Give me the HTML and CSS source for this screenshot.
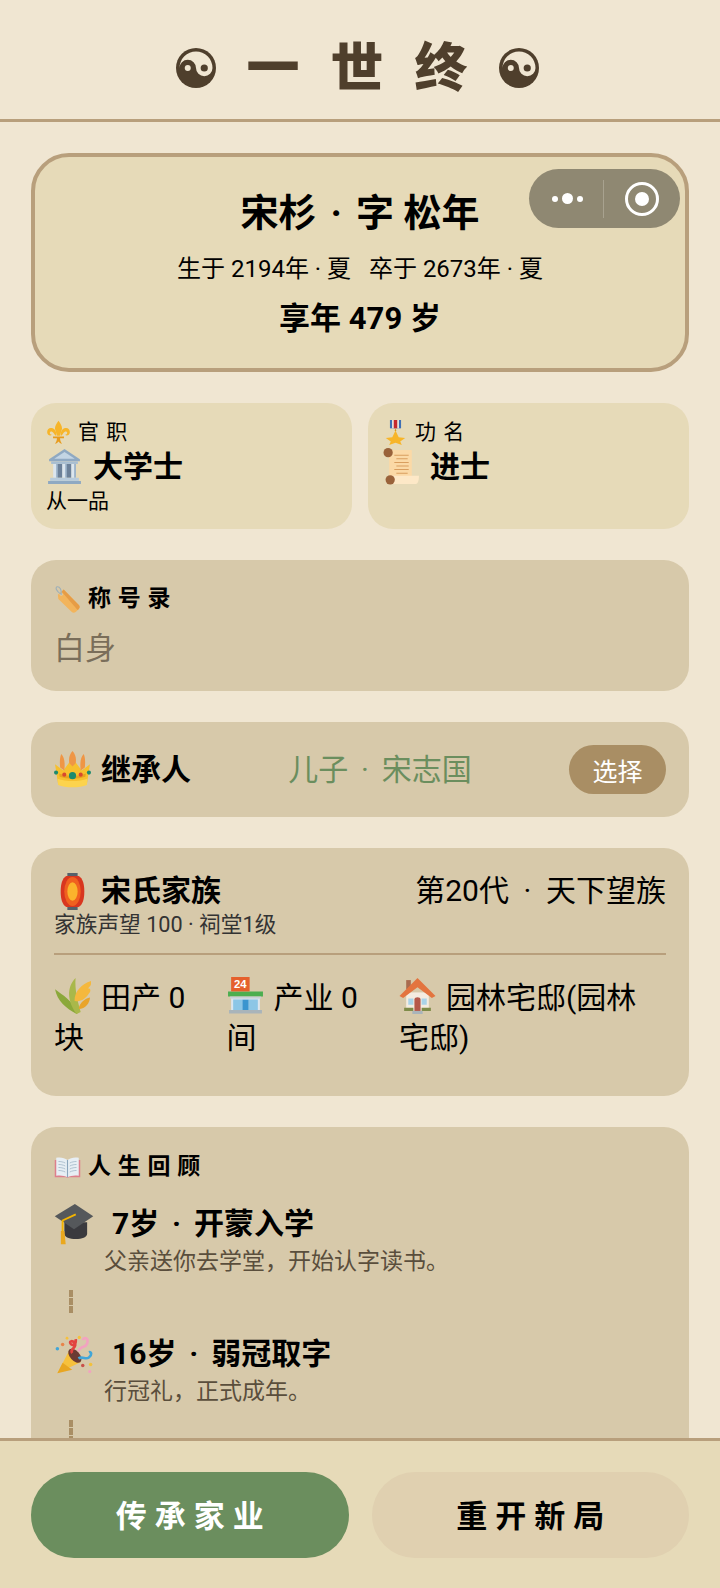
FILE: index.html
```html
<!DOCTYPE html>
<html lang="zh-CN">
<head>
    <meta charset="UTF-8">
    <meta name="viewport" content="width=device-width, initial-scale=1.0">
    <title>一世终</title>
    <link rel="stylesheet" href="styles.css">
</head>
<body>
    <svg class="defs" width="0" height="0">
        <defs>
            <symbol id="taiji" viewBox="0 0 40 40">
                <circle cx="20" cy="20" r="20" fill="#4f3f2c"/>
                <g transform="rotate(-90 20 20)">
                    <path d="M20 3.500a16.500 16.500 0 0 1 0 33 8.250 8.250 0 0 1 0-16.500 8.250 8.250 0 0 0 0-16.500z" fill="#f0e6d2"/>
                    <circle cx="20" cy="11.750" r="3" fill="#f0e6d2"/>
                    <circle cx="20" cy="28.250" r="3.600" fill="#4f3f2c"/>
                </g>
            </symbol>
            <symbol id="fleur" viewBox="0 0 32 32">
                <path d="M16 1c3 4 4.500 7 4.500 10S18 17 18 20h-4c0-3-2.500-6-2.500-9S13 5 16 1z" fill="#f7b529"/>
                <path d="M11 12C6 8 1 11 1.500 16c.3 3.500 4 5 6 3-1.800-.2-3-1.500-2.600-3 .5-2 3.500-1.500 5 1 1.200 2 2 3 3.100 3.500l.5-4z" fill="#f7b529"/>
                <path d="M21 12c5-4 10-1 9.500 4-.3 3.500-4 5-6 3 1.800-.2 3-1.500 2.600-3-.5-2-3.500-1.500-5 1-1.200 2-2 3-3.100 3.500l-.5-4z" fill="#f7b529"/>
                <path d="M9 21h14v2.500H18c0 3 1 5 2.500 7-2-.5-3.500-1.500-4.500-3-1 1.500-2.500 2.500-4.500 3 1.500-2 2.500-4 2.500-7H9z" fill="#e89b1c"/>
            </symbol>
            <symbol id="bank" viewBox="0 0 36 36">
                <path d="M18 1 33 11v2H3v-2z" fill="#8fa9c2"/>
                <path d="M18 4 28 10.500H8z" fill="#c3d5e4"/>
                <path d="M5 13h26v2.500H5z" fill="#a7bed2"/>
                <path d="M7 15.500h4.500V29H7zM15.700 15.500h4.600V29h-4.600zM24.500 15.500H29V29h-4.500z" fill="#dbe6ef"/>
                <path d="M10 15.500h1.500V29H10zM18.800 15.500h1.500V29h-1.500zM27.500 15.500H29V29h-1.500z" fill="#8fa9c2"/>
                <path d="M11.500 15.500h4.200V29h-4.200zM20.300 15.500h4.200V29h-4.200z" fill="#6c8199"/>
                <path d="M4 29h28v3H4z" fill="#b7cbdc"/>
                <path d="M2 32h32v3H2z" fill="#8fa9c2"/>
            </symbol>
            <symbol id="medal" viewBox="0 0 32 36">
                <path d="M8 0h16v12H8z" fill="#3f6fb5"/>
                <path d="M11 0h10v12H11z" fill="#e8e4dc"/>
                <path d="M13.500 0h5v12h-5z" fill="#c6282d"/>
                <path d="M16 12l1.300 4h-2.600z" fill="#d99a1c"/>
                <path d="m16 15 4.600 9.800 9.400 1-7.200 5.200 2.300 5-9.100-3.300L6.900 36l2.300-5L2 25.800l9.400-1z" fill="#f7b529"/>
            </symbol>
            <symbol id="scroll" viewBox="0 0 36 36">
                <path d="M6 2h22v28H6z" fill="#fbd9a6"/>
                <path d="M6 27h29c0 4-1 8-3 8H7z" fill="#fde8c7"/>
                <circle cx="5" cy="4.500" r="4.500" fill="#99623a"/>
                <circle cx="7" cy="31" r="4.500" fill="#99623a"/>
                <path d="M11 7h14M13 10.500h11M11 14h14M13 17.500h12M11 21h14M13 24.500h11" stroke="#d99e5f" stroke-width="1" fill="none"/>
            </symbol>
            <symbol id="tag" viewBox="0 0 28 28">
                <path d="M4 9 10 3.500l15.500 16c1.500 1.500 1.500 3 0 4.500l-3 3c-1.500 1-3 1-4.300-.3L4.500 13.500z" fill="#f2b45c"/>
                <path d="M10 3.500l15.500 16c1.500 1.500 1.500 3 0 4.500l-1 1L8 6z" fill="#e69c46"/>
                <circle cx="7.500" cy="8.500" r="1.600" fill="#d7c9aa"/>
                <path d="M7.500 8.500C2 5.500 1 1 3.500.8S8 4 7.500 8.500z" fill="none" stroke="#9fb0b8" stroke-width="1.200"/>
            </symbol>
            <symbol id="crown" viewBox="0 0 36 36">
                <path d="M1 13l8 6 9-12 9 12 8-6-3 19H4z" fill="#f7c02e"/>
                <path d="M7 3c3 3 4 8 3 16l-4-3c-.5-5-.5-9 1-13zM18 0c3 3 4 8 3 12l-3 3-3-3c-1-4 0-9 3-12zM29 3c-3 3-4 8-3 16l4-3c.5-5 .5-9-1-13z" fill="#ef9645"/>
                <path d="M3.500 27c8 3 21 3 29 0l-.5 6c-7 3-21 3-28 0z" fill="#fcd34d"/>
                <path d="M5 22c8 3 18 3 26 0l-.5 3c-7 2.500-18 2.500-25 0z" fill="#e8a31f"/>
                <circle cx="18" cy="24" r="3.500" fill="#1c8a6e"/>
                <circle cx="10" cy="23" r="2" fill="#d8482f"/>
                <circle cx="26" cy="23" r="2" fill="#d8482f"/>
                <circle cx="2" cy="21" r="2" fill="#1c8a6e"/>
                <circle cx="34" cy="21" r="2" fill="#1c8a6e"/>
            </symbol>
            <symbol id="lantern" viewBox="0 0 36 36">
                <path d="M13 0h10v4H13zM13 32h10v4H13z" fill="#56606a"/>
                <path d="M12 3h12c4 2 5.500 8 5.500 15S28 31 24 33H12c-4-2-5.500-8-5.500-15S8 5 12 3z" fill="#d8361f"/>
                <ellipse cx="18" cy="18" rx="8" ry="14" fill="#f0601f"/>
                <ellipse cx="18" cy="18" rx="5" ry="9" fill="#fbb32c"/>
            </symbol>
            <symbol id="rice" viewBox="0 0 36 36">
                <path d="M22 36C12 31 3 23 1 12c8 6 15 10 23 22z" fill="#8ba83a"/>
                <path d="M22 36C13 24 12 10 21 1c-1 11 2 23 5 33z" fill="#a9b84a"/>
                <path d="M20 23c0-9 7-16 16-19 1 4-2 6-3 7 3 0 3 3 1 5-3 5-9 9-14 7z" fill="#f5b83d"/>
                <path d="M24 31c1-6 6-10 11-11 0 5-5 12-11 11z" fill="#e9a42a"/>
            </symbol>
            <symbol id="store" viewBox="0 0 36 36">
                <path d="M4 20h28v14H4z" fill="#dbe6ef"/>
                <path d="M6 22h9v10H6zM21 22h9v10h-9z" fill="#8cc6e6"/>
                <path d="M15 22h6v12h-6z" fill="#3b95cf"/>
                <path d="M1 14h34v5H1z" fill="#4cae50"/>
                <path d="M3 19h30v2H3z" fill="#c7d1d9"/>
                <path d="M2 32h32v3.500H2z" fill="#a9b4ba"/>
                <path d="M4 0h18v14H4z" fill="#e5602c"/>
                <text class="store-num" x="13" y="11">24</text>
            </symbol>
            <symbol id="house" viewBox="0 0 36 36">
                <path d="M7 15h22v18H7z" fill="#f4ece0"/>
                <path d="M7 3h4.500v9H7z" fill="#a96b4f"/>
                <path d="M18 1 .5 18.500l3.500 2L18 10l14 10.500 3.500-2z" fill="#e3743f"/>
                <path d="M9 21h5v6H9zM22 21h5v6h-5z" fill="#a9d3e8"/>
                <path d="M15 33V22c0-3 6-3 6 0v11z" fill="#b5584a"/>
                <path d="M5 30h9v3H5zM22 30h9v3h-9z" fill="#7e8b48"/>
                <path d="M13 33h10v3H13z" fill="#a9b4ba"/>
            </symbol>
            <symbol id="book" viewBox="0 0 36 28">
                <path d="M1 4h34v23H20l-2 1-2-1H1z" fill="#dd7f8c"/>
                <path d="M3 1c6-1 11 0 15 3 4-3 9-4 15-3v24c-6-1-11 0-15 2-4-2-9-3-15-2z" fill="#e7eef4"/>
                <path d="M18 4v23" stroke="#8aa4bb" stroke-width="1.500"/>
                <path d="M6 6c3 0 6 .5 9 2M6 10c3 0 6 .5 9 2M6 14c3 0 6 .5 9 2M6 18c3 0 6 .5 9 2M30 6c-3 0-6 .5-9 2M30 10c-3 0-6 .5-9 2M30 14c-3 0-6 .5-9 2M30 18c-3 0-6 .5-9 2" stroke="#a8bccc" stroke-width="1.200" fill="none"/>
            </symbol>
            <symbol id="cap" viewBox="0 0 44 48">
                <path d="M11 22v13c0 4 6 6 13 6s13-2 13-6V22z" fill="#3a3a3e"/>
                <path d="M23 1 44 15 22 30 0 15z" fill="#55585b"/>
                <path d="M24 13 9 20v14" fill="none" stroke="#f4b400" stroke-width="2.200"/>
                <path d="M7 32h4l1.500 15H7z" fill="#eaa81e"/>
            </symbol>
            <symbol id="popper" viewBox="0 0 44 48">
                <path d="M3 46 17 19l13 14z" fill="#f7c13c"/>
                <path d="M3 46l6-12 11 8z" fill="#e8a622"/>
                <ellipse cx="23" cy="26" rx="5.500" ry="9.500" transform="rotate(-42 23 26)" fill="#6b3a33"/>
                <path d="M20 23c-4-5 6-6 3-11-2-4-7-3-5 0 1.500 3 7 2 6-5" fill="none" stroke="#e2433f" stroke-width="3"/>
                <path d="M27 21c3-8 8-3 10-9s-3-8-5-4" fill="none" stroke="#f2a3c0" stroke-width="3"/>
                <path d="M27 29c5-3 8 2 12-1s3-7 0-6" fill="none" stroke="#41a6d8" stroke-width="3"/>
                <circle cx="3" cy="18" r="2" fill="#41a6d8"/>
                <circle cx="9" cy="13" r="2" fill="#e8834a"/>
                <circle cx="14" cy="6" r="1.600" fill="#f7c13c"/>
                <circle cx="28" cy="5" r="1.800" fill="#f7c13c"/>
                <circle cx="41" cy="36" r="2" fill="#f2c13c"/>
                <circle cx="32" cy="37" r="2" fill="#c9504a"/>
                <circle cx="40" cy="44" r="1.800" fill="#f2a3c0"/>
            </symbol>
        </defs>
    </svg>

    <header class="top-bar">
        <svg class="taiji"><use href="#taiji"/></svg>
        <h1>一世终</h1>
        <svg class="taiji"><use href="#taiji"/></svg>
    </header>

    <!-- 小程序胶囊按钮 -->
    <div class="capsule">
        <div class="capsule-dots"><span></span><span class="big"></span><span></span></div>
        <div class="capsule-line"></div>
        <div class="capsule-ring"><span></span></div>
    </div>

    <main class="content">
        <section class="hero">
            <h2>宋杉 <span class="sep">·</span> 字 松年</h2>
            <p class="hero-dates">生于 2194年 · 夏&nbsp;&nbsp;&nbsp;卒于 2673年 · 夏</p>
            <p class="hero-age">享年 479 岁</p>
        </section>

        <section class="rank-row">
            <div class="rank-card">
                <div class="rank-label"><svg class="ico-label"><use href="#fleur"/></svg>官 职</div>
                <div class="rank-name"><svg class="ico-big"><use href="#bank"/></svg>大学士</div>
                <div class="rank-sub">从一品</div>
            </div>
            <div class="rank-card">
                <div class="rank-label"><svg class="ico-label"><use href="#medal"/></svg>功 名</div>
                <div class="rank-name"><svg class="ico-big"><use href="#scroll"/></svg>进士</div>
            </div>
        </section>

        <section class="panel titles">
            <div class="panel-title"><svg class="ico-title"><use href="#tag"/></svg>称 号 录</div>
            <div class="titles-empty">白身</div>
        </section>

        <section class="panel heir">
            <div class="heir-label"><svg class="ico-big"><use href="#crown"/></svg>继承人</div>
            <div class="heir-name">儿子 <span class="sep">·</span> 宋志国</div>
            <button class="heir-btn">选择</button>
        </section>

        <section class="panel family">
            <div class="family-head">
                <div>
                    <div class="family-name"><svg class="ico-big"><use href="#lantern"/></svg>宋氏家族</div>
                    <div class="family-sub">家族声望 100 · 祠堂1级</div>
                </div>
                <div class="family-rank">第20代 <span class="sep">·</span> 天下望族</div>
            </div>
            <div class="family-assets">
                <div><svg class="ico-big"><use href="#rice"/></svg>田产 0 块</div>
                <div><svg class="ico-big"><use href="#store"/></svg>产业 0 间</div>
                <div><svg class="ico-big"><use href="#house"/></svg>园林宅邸(园林宅邸)</div>
            </div>
        </section>

        <section class="panel review">
            <div class="panel-title"><svg class="ico-book"><use href="#book"/></svg>人 生 回 顾</div>
            <div class="event">
                <div class="event-title"><svg class="ico-event"><use href="#cap"/></svg><span>7岁 <span class="sep">·</span> 开蒙入学</span></div>
                <div class="event-desc">父亲送你去学堂，开始认字读书。</div>
            </div>
            <div class="event-link"></div>
            <div class="event">
                <div class="event-title"><svg class="ico-event"><use href="#popper"/></svg><span>16岁 <span class="sep">·</span> 弱冠取字</span></div>
                <div class="event-desc">行冠礼，正式成年。</div>
            </div>
            <div class="event-link"></div>
        </section>
    </main>

    <footer class="bottom-bar">
        <button class="btn btn-green">传承家业</button>
        <button class="btn btn-plain">重开新局</button>
    </footer>
</body>
</html>
```

FILE: styles.css
```css
* {
    box-sizing: border-box;
}
html, body {
    height: 100%;
}
body {
    margin: 0;
    display: flex;
    flex-direction: column;
    height: 1588px;
    overflow: hidden;
    position: relative;
    background-color: #f0e6d2;
    color: #000;
    font-family: Roboto, "Noto Sans CJK SC", sans-serif;
}
.defs {
    position: absolute;
}
.store-num {
    font-family: "Liberation Sans", sans-serif;
    font-size: 11px;
    font-weight: bold;
    fill: #fff;
    text-anchor: middle;
}
h1, h2, p {
    margin: 0;
}
svg {
    flex-shrink: 0;
}
.sep {
    margin: 0 .18em;
}

/* 顶部标题 */
.top-bar {
    flex: none;
    height: 122px;
    padding: 20px 6px 0 0;
    display: flex;
    align-items: center;
    justify-content: center;
    gap: 31px;
    border-bottom: 3px solid #b89f7c;
}
.top-bar h1 {
    font-size: 53px;
    font-weight: 900;
    line-height: 1.3;
    letter-spacing: 31px;
    margin-right: -31px;
    color: #4f3f2c;
}
.taiji {
    width: 40px;
    height: 40px;
    margin-bottom: 3px;
}

/* 胶囊 */
.capsule {
    position: absolute;
    left: 529px;
    top: 169px;
    width: 151px;
    height: 59px;
    border-radius: 30px;
    background-color: #8f8872;
    display: flex;
    align-items: center;
}
.capsule-dots {
    width: 74px;
    display: flex;
    align-items: center;
    justify-content: center;
    gap: 4px;
    padding-left: 2px;
}
.capsule-dots span {
    width: 6px;
    height: 6px;
    border-radius: 50%;
    background-color: #fff;
}
.capsule-dots .big {
    width: 11px;
    height: 11px;
}
.capsule-line {
    width: 1px;
    height: 38px;
    background-color: #a8a28f;
}
.capsule-ring {
    width: 34px;
    height: 34px;
    margin-left: 21px;
    border: 3px solid #fff;
    border-radius: 50%;
    display: flex;
    align-items: center;
    justify-content: center;
}
.capsule-ring span {
    width: 14px;
    height: 14px;
    border-radius: 50%;
    background-color: #fff;
}

/* 内容区 */
.content {
    flex: 1;
    min-height: 0;
    overflow: hidden;
    padding: 31px 31px 0;
    display: flex;
    flex-direction: column;
    gap: 31px;
}
.content > section {
    flex: none;
}
.hero {
    height: 219px;
    padding-top: 28px;
    border: 4px solid #b89f7c;
    border-radius: 38px;
    background-color: #e6dab8;
    text-align: center;
}
.hero h2 {
    font-size: 38px;
    font-weight: 700;
    line-height: 56px;
}
.hero h2 .sep {
    margin: 0 .12em;
}
.hero-dates {
    font-size: 24px;
    line-height: 34px;
    margin-top: 11px;
}
.hero-age {
    font-size: 31px;
    font-weight: 700;
    line-height: 44px;
    margin-top: 11px;
}

.rank-row {
    display: flex;
    gap: 16px;
}
.rank-card {
    flex: 1;
    height: 126px;
    padding: 13px 15px;
    border-radius: 25px;
    background-color: #e6dab8;
}
.rank-label {
    display: flex;
    align-items: center;
    gap: 7px;
    font-size: 21px;
    line-height: 32px;
    letter-spacing: 1px;
}
.ico-label {
    width: 25px;
    height: 25px;
}
.rank-name {
    display: flex;
    align-items: center;
    gap: 10px;
    font-size: 30px;
    font-weight: 700;
    line-height: 36px;
}
.ico-big {
    width: 37px;
    height: 37px;
}
.rank-sub {
    font-size: 21px;
    line-height: 32px;
}

.panel {
    padding: 0 23px;
    border-radius: 25px;
    background-color: #d7c9aa;
}
.panel-title {
    display: flex;
    align-items: center;
    gap: 7px;
    font-size: 23px;
    font-weight: 700;
    line-height: 34px;
    letter-spacing: .5px;
}
.ico-title {
    width: 27px;
    height: 27px;
}
.ico-book {
    width: 27px;
    height: 21px;
}
.titles {
    height: 131px;
    padding-top: 22px;
}
.titles-empty {
    font-size: 31px;
    line-height: 44px;
    margin-top: 11px;
    color: #7a6e5a;
}

.heir {
    height: 95px;
    display: flex;
    align-items: center;
    justify-content: space-between;
}
.heir-label {
    display: flex;
    align-items: center;
    gap: 10px;
    font-size: 30px;
    font-weight: 700;
    padding-bottom: 6px;
}
.heir-label svg {
    margin-top: 6px;
}
.heir-name {
    font-size: 30px;
    color: #6b8e5e;
    padding-bottom: 6px;
}
.heir-btn {
    width: 97px;
    height: 49px;
    padding: 0;
    border: none;
    border-radius: 25px;
    background-color: #a98e64;
    color: #fff;
    font-family: inherit;
    font-size: 25px;
}

.family {
    height: 248px;
    padding-top: 24px;
}
.family-head {
    display: flex;
    justify-content: space-between;
    align-items: flex-start;
    padding-bottom: 12px;
    border-bottom: 2px solid #b89f7c;
}
.family-name {
    display: flex;
    align-items: center;
    gap: 10px;
    font-size: 30px;
    font-weight: 700;
    line-height: 38px;
}
.family-sub {
    font-size: 21.700px;
    line-height: 32px;
    margin-top: -1px;
    color: #333;
}
.family-rank {
    font-size: 30px;
    line-height: 36px;
    margin-top: 1px;
}
.family-rank .sep {
    margin: 0 .24em;
}
.family-assets {
    display: grid;
    grid-template-columns: 150px 150px 264px;
    column-gap: 22.500px;
    margin-top: 22px;
    font-size: 30px;
    line-height: 40px;
}
.family-assets svg {
    vertical-align: -6px;
    margin-right: 10px;
}

.review {
    padding-top: 23px;
    height: 400px;
}
.event {
    margin-top: 19px;
}
.event-title {
    display: flex;
    align-items: center;
    gap: 18px;
    font-size: 30px;
    font-weight: 700;
    line-height: 40px;
}
.ico-event {
    width: 40px;
    height: 42px;
}
.event-desc {
    padding-left: 50px;
    font-size: 23px;
    line-height: 33px;
    color: #5a4e3c;
}
.event-link {
    width: 4px;
    height: 24px;
    margin: 12px 0 2px 15px;
    background: repeating-linear-gradient(#a98e64 0 7px, #d7c9aa 7px 8px);
}

/* 底部按钮 */
.bottom-bar {
    flex: none;
    height: 150px;
    padding: 31px 31px 0;
    display: flex;
    gap: 23px;
    border-top: 3px solid #b89f7c;
    background-color: #e6dab8;
    position: relative;
}
.btn {
    flex: 1;
    height: 86px;
    padding: 0 0 4px 8px;
    border: none;
    border-radius: 43px;
    font-family: inherit;
    font-size: 31px;
    font-weight: 700;
    letter-spacing: 8px;
}
.btn-green {
    background-color: #6b8e5e;
    color: #fff;
}
.btn-plain {
    background-color: #e0d0b0;
    color: #000;
}
```
